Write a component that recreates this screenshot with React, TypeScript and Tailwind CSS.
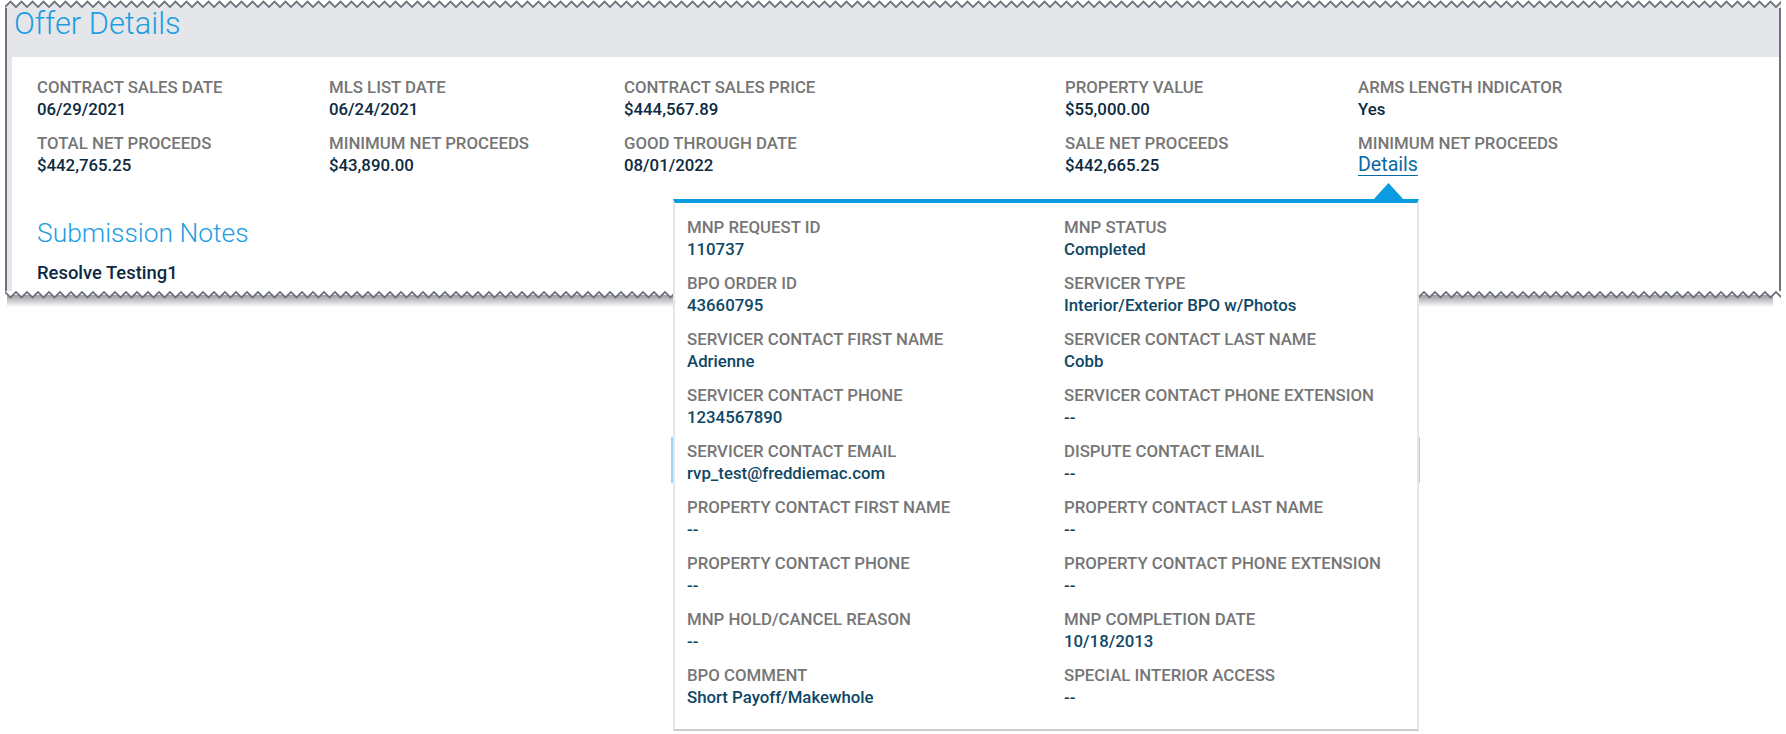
import React from "react";

const topRows: { label: string; value: string; link?: boolean }[][] = [
  [
    { label: "CONTRACT SALES DATE", value: "06/29/2021" },
    { label: "MLS LIST DATE", value: "06/24/2021" },
    { label: "CONTRACT SALES PRICE", value: "$444,567.89" },
    { label: "PROPERTY VALUE", value: "$55,000.00" },
    { label: "ARMS LENGTH INDICATOR", value: "Yes" },
  ],
  [
    { label: "TOTAL NET PROCEEDS", value: "$442,765.25" },
    { label: "MINIMUM NET PROCEEDS", value: "$43,890.00" },
    { label: "GOOD THROUGH DATE", value: "08/01/2022" },
    { label: "SALE NET PROCEEDS", value: "$442,665.25" },
    { label: "MINIMUM NET PROCEEDS", value: "Details", link: true },
  ],
];

const popRows: [string, string][] = [
  ["MNP REQUEST ID", "110737"],
  ["MNP STATUS", "Completed"],
  ["BPO ORDER ID", "43660795"],
  ["SERVICER TYPE", "Interior/Exterior BPO w/Photos"],
  ["SERVICER CONTACT FIRST NAME", "Adrienne"],
  ["SERVICER CONTACT LAST NAME", "Cobb"],
  ["SERVICER CONTACT PHONE", "1234567890"],
  ["SERVICER CONTACT PHONE EXTENSION", "--"],
  ["SERVICER CONTACT EMAIL", "rvp_test@freddiemac.com"],
  ["DISPUTE CONTACT EMAIL", "--"],
  ["PROPERTY CONTACT FIRST NAME", "--"],
  ["PROPERTY CONTACT LAST NAME", "--"],
  ["PROPERTY CONTACT PHONE", "--"],
  ["PROPERTY CONTACT PHONE EXTENSION", "--"],
  ["MNP HOLD/CANCEL REASON", "--"],
  ["MNP COMPLETION DATE", "10/18/2013"],
  ["BPO COMMENT", "Short Payoff/Makewhole"],
  ["SPECIAL INTERIOR ACCESS", "--"],
];

function TopEdge() {
  return (
    <svg className="block w-full h-[8px]" preserveAspectRatio="none">
      <defs>
        <pattern id="zzTop" width="11" height="8" patternUnits="userSpaceOnUse">
          <path d="M0 7 L5.5 1.5 L11 7 V8 H0 Z" fill="#e5e6ea" />
          <path d="M-0.5 7.5 L5.5 1.5 L11.5 7.5" stroke="#6c717a" strokeWidth="1.8" fill="none" />
        </pattern>
      </defs>
      <rect x="0" y="0" width="100%" height="8" fill="url(#zzTop)" />
    </svg>
  );
}

function BottomEdge() {
  return (
    <div className="relative h-[17px]">
      <div className="absolute left-[2px] right-[8px] top-[4px] h-[12px] bg-gradient-to-b from-[#9c9ca0] to-white" />
      <svg className="absolute left-0 top-0 block w-full h-[9px]">
        <defs>
          <pattern id="zzBot" width="11" height="9" patternUnits="userSpaceOnUse">
            <path d="M0 1 L5.5 6.5 L11 1 V0 H0 Z" fill="#ffffff" />
            <path d="M-0.5 0.5 L5.5 6.5 L11.5 0.5" stroke="#6c717a" strokeWidth="1.8" fill="none" />
          </pattern>
        </defs>
        <rect x="0" y="0" width="100%" height="9" fill="url(#zzBot)" />
      </svg>
    </div>
  );
}

function Field({ label, value, link }: { label: string; value: string; link?: boolean }) {
  return (
    <div className="flex flex-col">
      <div className="text-[16.8px] leading-[22px] font-medium text-[#767676] whitespace-nowrap">{label}</div>
      {link ? (
        <div className="leading-[22px]">
          <span className="inline-block text-[19.6px] leading-[21px] text-[#0a6aa6] border-b border-[#0a6aa6]">
            {value}
          </span>
        </div>
      ) : (
        <div className="text-[16.8px] leading-[22px] font-medium text-[#0b2940] whitespace-nowrap">{value}</div>
      )}
    </div>
  );
}

export default function App() {
  return (
    <div
      className="relative w-[1786px] h-[734px] bg-white overflow-hidden"
      style={{ fontFamily: "Roboto, 'Noto Sans', sans-serif" }}
    >
      {/* torn panel */}
      <div className="ml-[5px] w-[1776px] flex flex-col">
        <TopEdge />
        <div className="border-x-2 border-[#6f747c] bg-[#e5e6ea]">
          <div className="h-[49px] pl-[7px] flex items-start">
            <h1 className="text-[30.8px] leading-[34px] font-light text-[#1d9de2] -mt-[1px]">Offer Details</h1>
          </div>
          <div className="ml-[5px] bg-white pl-[25px] pt-[19px] pb-[7px]">
            <div className="grid grid-cols-[292px_295px_441px_293px_1fr] gap-y-[12px]">
              {topRows.flat().map((f, i) => (
                <Field key={i} label={f.label} value={f.value} link={f.link} />
              ))}
            </div>
            <h2 className="mt-[40px] text-[26.4px] leading-[32px] font-light text-[#1d9de2]">Submission Notes</h2>
            <div className="mt-[13px] text-[18.4px] leading-[22px] font-medium text-[#0b2940]">Resolve Testing1</div>
          </div>
        </div>
        <BottomEdge />
      </div>

      {/* bits of underlying page */}
      <div className="absolute left-[671px] top-[437px] w-[2px] h-[46px] bg-[#9fd3ee]" />
      <div className="absolute left-[1418px] top-[437px] w-[2px] h-[46px] bg-[#9fd3ee]" />

      {/* pointer triangle */}
      <svg className="absolute left-[1373px] top-[183px]" width="31" height="17" viewBox="0 0 31 17">
        <path d="M0 17 L15.5 0 L31 17 Z" fill="#0a9be0" />
      </svg>

      {/* popover */}
      <div className="absolute left-[673px] top-[199px] w-[746px] h-[532px] bg-white border-t-4 border-t-[#0a9be0] border-x-2 border-x-[#e4e6e9] border-b-2 border-b-[#c9cdd2]">
        <div className="grid grid-cols-[377px_1fr] gap-y-[12px] pl-[12px] pt-[13px]">
          {popRows.map(([l, v], i) => (
            <div key={i} className="flex flex-col">
              <div className="text-[16.8px] leading-[22px] font-medium text-[#767676] whitespace-nowrap">{l}</div>
              <div className="text-[16.8px] leading-[22px] font-medium text-[#0e4766] whitespace-nowrap">{v}</div>
            </div>
          ))}
        </div>
      </div>
    </div>
  );
}
